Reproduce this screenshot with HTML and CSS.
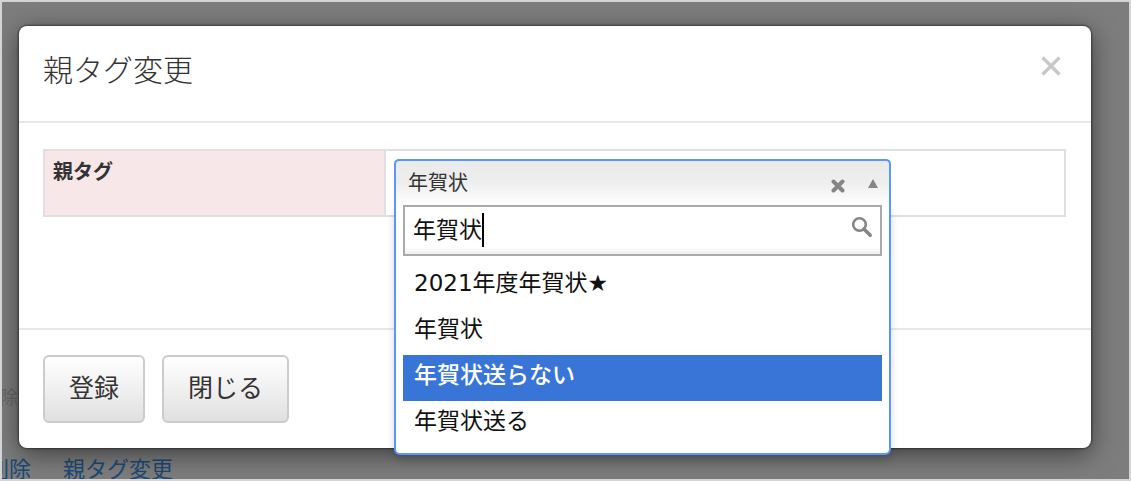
FILE: index.html
```html
<!DOCTYPE html>
<html lang="ja">
<head>
    <meta charset="UTF-8">
    <meta name="viewport" content="width=device-width, initial-scale=1.0">
    <title>親タグ変更</title>
    <link rel="stylesheet" href="styles.css">
</head>
<body>
    <div class="page">
        <div class="page-note">除</div>
        <div class="page-links">
            <a href="#">削除</a>
            <a href="#">親タグ変更</a>
        </div>
    </div>

    <div class="overlay">
        <div class="modal" role="dialog" aria-labelledby="modalTitle">
            <div class="modal-header">
                <h1 id="modalTitle">親タグ変更</h1>
                <button type="button" class="close" aria-label="閉じる">
                    <svg width="20" height="20" viewBox="0 0 20 20"><path d="M1.5 1.5 18.5 18.5M18.5 1.5 1.5 18.5" stroke="#c8c8c8" stroke-width="3.2" fill="none"/></svg>
                </button>
            </div>

            <div class="modal-body">
                <table class="form-table">
                    <tr>
                        <th scope="row" id="tagLabel">親タグ</th>
                        <td>
                            <div class="select">
                                <div class="select-choice">
                                    <button type="button" class="select-value" aria-labelledby="tagLabel" aria-expanded="true">年賀状</button>
                                    <button type="button" class="select-clear" aria-label="クリア">
                                        <svg width="14" height="14" viewBox="0 0 14 14"><path d="M2.5 2.5 11.5 11.5M11.5 2.5 2.5 11.5" stroke="#858585" stroke-width="4" stroke-linecap="round"/></svg>
                                    </button>
                                    <svg class="select-arrow" width="10" height="9" viewBox="0 0 10 9"><path d="M5 0 10 9H0Z" fill="#858585"/></svg>
                                </div>
                                <div class="select-drop">
                                    <div class="select-search">
                                        <input type="text" id="tagSearch" value="年賀状" aria-label="親タグ検索">
                                        <span class="caret"></span>
                                        <svg class="search-icon" width="22" height="22" viewBox="0 0 22 22"><circle cx="8.5" cy="8.5" r="6.3" fill="none" stroke="#858585" stroke-width="2.6"/><path d="M13 13 19.2 19.2" stroke="#858585" stroke-width="3.6" stroke-linecap="round"/></svg>
                                    </div>
                                    <ul class="select-results" role="listbox">
                                        <li role="option">2021年度年賀状★</li>
                                        <li role="option">年賀状</li>
                                        <li role="option" class="highlighted" aria-selected="true">年賀状送らない</li>
                                        <li role="option">年賀状送る</li>
                                    </ul>
                                </div>
                            </div>
                        </td>
                    </tr>
                </table>
            </div>

            <div class="modal-footer">
                <button type="button" class="btn">登録</button>
                <button type="button" class="btn">閉じる</button>
            </div>
        </div>
    </div>
</body>
</html>
```
FILE: styles.css
```css
:root {
    --text-color: #333;
    --line-color: #e0e0e0;
    --focus-color: #5897fb;
}

* {
    box-sizing: border-box;
}

body {
    margin: 0;
    font-family: "DejaVu Sans", "Noto Sans CJK JP", sans-serif;
    color: var(--text-color);
}

button,
input {
    font-family: inherit;
    color: inherit;
}

/* page behind the dialog */
.page {
    height: 100vh;
    display: flex;
    flex-direction: column;
    justify-content: flex-end;
    overflow: hidden;
    background: #fafafa;
}

.page-note {
    margin-bottom: 46px;
    font-size: 18px;
    line-height: 24px;
    color: #d0d0d0;
}

.page-links {
    display: flex;
    gap: 32px;
    margin-left: -13px;
    margin-bottom: -3px;
    font-size: 22px;
    line-height: 28px;
}

.page-links a {
    color: #3a94e8;
    text-decoration: none;
}

.overlay {
    position: absolute;
    inset: 0;
    padding: 24px 38px 0 17px;
    border: 2px solid #d4d4d4;
    background: rgba(0, 0, 0, 0.5);
    background-clip: padding-box;
    overflow: hidden;
}

.modal {
    background: #fff;
    border-radius: 8px;
    box-shadow: 0 0 2px 1px rgba(0, 0, 0, 0.45), 0 6px 26px rgba(0, 0, 0, 0.5);
}

.modal-header {
    display: flex;
    justify-content: space-between;
    align-items: flex-start;
    padding: 24px 30px 29px 24px;
    border-bottom: 2px solid #e8e8e8;
}

.modal-header h1 {
    margin: 0;
    font-size: 30px;
    line-height: 42px;
    font-weight: 300;
}

.close {
    display: flex;
    margin-top: 6px;
    padding: 0;
    border: none;
    background: none;
    cursor: pointer;
}

.modal-body {
    min-height: 205px;
    padding: 26px 25px 26px 24px;
}

.form-table {
    width: 100%;
    table-layout: fixed;
    border-collapse: collapse;
}

.form-table th,
.form-table td {
    border: 2px solid var(--line-color);
    padding: 8px;
    vertical-align: top;
}

.form-table th {
    width: 33.4%;
    background: #f7e7e9;
    font-size: 20px;
    line-height: 26px;
    text-align: left;
}

/* tag select */
.select {
    position: relative;
    width: 77%;
    max-width: 497px;
    height: 48px;
}

.select-choice {
    display: flex;
    align-items: center;
    height: 46px;
    padding: 0 11px 0 12px;
    border: 2px solid var(--focus-color);
    border-bottom: none;
    border-radius: 5px 5px 0 0;
    background: linear-gradient(#eaeaea, #eee 50%, #fff);
}

.select-value {
    flex: 1;
    padding: 0;
    border: none;
    background: none;
    font-size: 20px;
    line-height: 40px;
    text-align: left;
}

.select-clear {
    display: flex;
    margin-top: 6px;
    margin-right: 23px;
    padding: 0;
    border: none;
    background: none;
}

.select-drop {
    position: absolute;
    top: 46px;
    left: 0;
    right: 0;
    z-index: 10;
    padding: 0 7px 6px;
    border: 2px solid var(--focus-color);
    border-top: none;
    border-radius: 0 0 6px 6px;
    background: #fff;
    box-shadow: 0 6px 8px rgba(0, 0, 0, 0.15);
}

.select-search {
    position: relative;
}

.select-search input {
    display: block;
    width: 100%;
    height: 51px;
    padding: 0 44px 6px 8px;
    border: 2px solid #aaa;
    background: linear-gradient(#fff 85%, #eee);
    font-size: 23px;
    color: #111;
    outline: none;
}

.caret {
    position: absolute;
    top: 8px;
    left: 79px;
    width: 2px;
    height: 34px;
    background: #000;
}

.search-icon {
    position: absolute;
    top: 11px;
    right: 9px;
}

.select-results {
    margin: 7px 0 0;
    padding: 0;
    list-style: none;
}

.select-results li {
    padding: 0 11px 6px;
    font-size: 23px;
    line-height: 40px;
    color: #111;
}

.select-results .highlighted {
    background: #3875d7;
    color: #fff;
    font-weight: 500;
}

.modal-footer {
    display: flex;
    gap: 17px;
    padding: 25px 24px;
    border-top: 2px solid #e8e8e8;
}

.btn {
    height: 68px;
    padding: 0 24px 6px;
    border: 2px solid #ccc;
    border-radius: 6px;
    background: linear-gradient(#fff, #e0e0e0);
    font-size: 25px;
    cursor: pointer;
}
```
